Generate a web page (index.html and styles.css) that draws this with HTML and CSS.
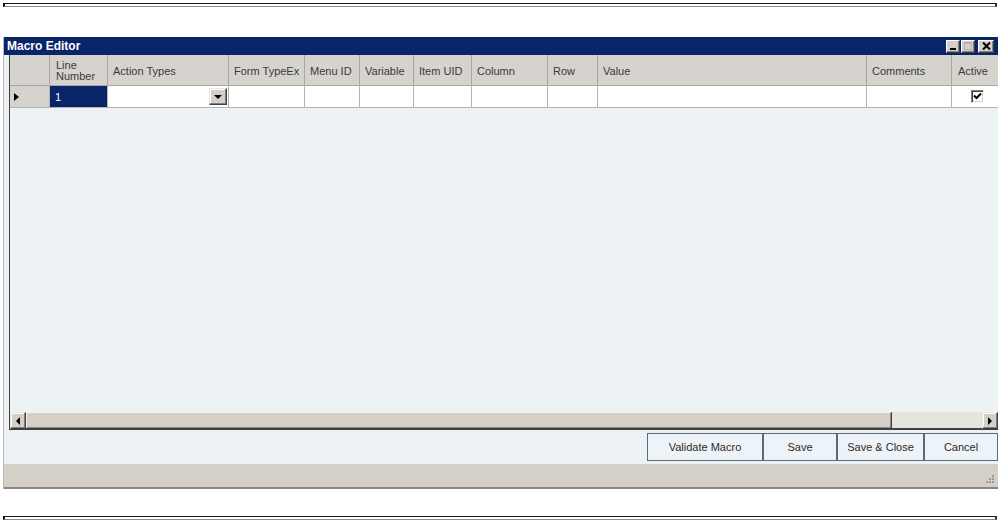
FILE: index.html
```html
<!DOCTYPE html>
<html lang="en">
<head>
  <meta charset="UTF-8">
  <title>Macro Editor</title>
  <link rel="stylesheet" href="styles.css">
</head>
<body>
<div class="rule"></div>

<div class="window">
  <div class="titlebar">
    <span class="title">Macro Editor</span>
    <div class="caption-btns">
      <div class="cap-btn min"><span></span></div>
      <div class="cap-btn max"><span></span></div>
      <div class="cap-btn close">
        <svg width="9" height="8" viewBox="0 0 9 8"><path d="M1 0.5 L8 7.5 M8 0.5 L1 7.5" stroke="#000" stroke-width="2"/></svg>
      </div>
    </div>
  </div>

  <div class="grid">
    <div class="head">
      <div class="hc"></div>
      <div class="hc two">Line<br>Number</div>
      <div class="hc">Action Types</div>
      <div class="hc">Form TypeEx</div>
      <div class="hc">Menu ID</div>
      <div class="hc">Variable</div>
      <div class="hc">Item UID</div>
      <div class="hc">Column</div>
      <div class="hc">Row</div>
      <div class="hc">Value</div>
      <div class="hc">Comments</div>
      <div class="hc">Active</div>
    </div>
    <div class="row">
      <div class="rc rowhead"><span class="arrow"></span></div>
      <div class="rc selected">1</div>
      <div class="rc combo"><div class="drop"><span></span></div></div>
      <div class="rc"></div>
      <div class="rc"></div>
      <div class="rc"></div>
      <div class="rc"></div>
      <div class="rc"></div>
      <div class="rc"></div>
      <div class="rc"></div>
      <div class="rc"></div>
      <div class="rc check-cell">
        <div class="check">
          <svg width="9" height="9" viewBox="0 0 9 9"><path d="M1 3.5 L3.5 6 L8 1.5" fill="none" stroke="#000" stroke-width="2"/></svg>
        </div>
      </div>
    </div>
    <div class="empty"></div>
    <div class="hscroll">
      <div class="sb-btn"><span class="tri-left"></span></div>
      <div class="thumb"></div>
      <div class="track"></div>
      <div class="sb-btn"><span class="tri-right"></span></div>
    </div>
  </div>

  <div class="actions">
    <div class="btn validate">Validate Macro</div>
    <div class="btn save">Save</div>
    <div class="btn save-close">Save &amp; Close</div>
    <div class="btn cancel">Cancel</div>
  </div>

  <div class="statusbar">
    <svg class="grip" width="11" height="11" viewBox="0 0 11 11">
      <g fill="#9a9890">
        <rect x="8" y="0" width="2" height="2"/>
        <rect x="5" y="3" width="2" height="2"/>
        <rect x="8" y="3" width="2" height="2"/>
        <rect x="2" y="6" width="2" height="2"/>
        <rect x="5" y="6" width="2" height="2"/>
        <rect x="8" y="6" width="2" height="2"/>
      </g>
    </svg>
  </div>
</div>

<div class="rule bottom"></div>
</body>
</html>
```

FILE: styles.css
```css
/* page */
* {
  box-sizing: border-box;
}

html,
body {
  margin: 0;
  padding: 0;
}

body {
  background: #fff;
  font-family: "Liberation Sans", Arial, sans-serif;
  font-size: 11px;
  color: #222;
}

/* thin rules above and below the form */
.rule {
  width: 994px;
  height: 4px;
  margin: 3px 0 0 3px;
  border-top: 1px solid #1c1c1c;
  border-bottom: 1px solid #8a8a8a;
  border-left: 2px solid #111;
  border-right: 2px solid #333;
}

.rule.bottom {
  margin-top: 27px;
}

/* window */
.window {
  width: 995px;
  height: 452px;
  margin: 30px 0 0 3px;
  display: flex;
  flex-direction: column;
  background: #edf2f5;
  border-left: 1px solid #b8b8b8;
}

.titlebar {
  height: 18px;
  flex: none;
  background: #0a246a;
  display: flex;
  align-items: center;
  justify-content: space-between;
  padding: 0 4px 0 3px;
}

.title {
  color: #fff;
  font-weight: bold;
  font-size: 12px;
}

.caption-btns {
  display: flex;
  gap: 1px;
}

.cap-btn {
  width: 14px;
  height: 13px;
  background: #d4d0c8;
  border: 1px solid;
  border-color: #fff #404040 #404040 #fff;
  box-shadow: inset -1px -1px #808080;
  position: relative;
}

.cap-btn.close {
  width: 16px;
  margin-left: 2px;
  display: flex;
  align-items: center;
  justify-content: center;
}

.cap-btn.min span {
  position: absolute;
  left: 3px;
  bottom: 2px;
  width: 6px;
  height: 2px;
  background: #000;
}

.cap-btn.max span {
  position: absolute;
  left: 2px;
  top: 1px;
  width: 8px;
  height: 8px;
  border: 1px solid #b4b0a8;
  border-top-width: 2px;
}

/* grid */
.grid {
  height: 375px;
  flex: none;
  margin-left: 5px;
  display: flex;
  flex-direction: column;
  border-left: 1px solid #404040;
  border-bottom: 1px solid #404040;
}

.head,
.row {
  display: grid;
  grid-template-columns: 40px 58px 121px 76px 55px 54px 58px 76px 50px 269px 85px 46px;
}

.hc {
  height: 31px;
  background: #d6d3ce;
  border-right: 1px solid #a9a7a2;
  border-bottom: 1px solid #a9a7a2;
  display: flex;
  align-items: center;
  padding: 1px 0 0 5px;
  color: #3a3a3a;
  white-space: nowrap;
}

.hc:last-child {
  border-right: none;
  padding-left: 6px;
}

.hc.two {
  line-height: 11px;
  padding-left: 6px;
  padding-top: 1px;
}

.rc {
  height: 22px;
  background: #fff;
  border-right: 1px solid #b4b4b4;
  border-bottom: 1px solid #b4b4b4;
}

.rc:last-child {
  border-right: none;
}

.rc.rowhead {
  background: #d6d3ce;
  display: flex;
  align-items: center;
  padding-left: 4px;
}

.arrow {
  width: 0;
  height: 0;
  border-left: 5px solid #000;
  border-top: 4px solid transparent;
  border-bottom: 4px solid transparent;
}

.rc.selected {
  background: #0a246a;
  color: #fff;
  padding: 5px 0 0 5px;
}

.rc.combo {
  display: flex;
  justify-content: flex-end;
  align-items: center;
  padding-right: 1px;
}

.drop {
  width: 18px;
  height: 17px;
  background: #d4d0c8;
  border: 1px solid;
  border-color: #e8e6e2 #404040 #404040 #e8e6e2;
  box-shadow: inset -1px -1px #808080, inset 1px 1px #fff;
  display: flex;
  align-items: center;
  justify-content: center;
}

.drop span {
  width: 0;
  height: 0;
  border-top: 4px solid #000;
  border-left: 4px solid transparent;
  border-right: 4px solid transparent;
  margin-top: 1px;
}

.check-cell {
  display: flex;
  align-items: center;
  justify-content: center;
  padding-left: 4px;
}

.check {
  width: 13px;
  height: 13px;
  background: #fff;
  border: 1px solid;
  border-color: #808080 #fff #fff #808080;
  box-shadow: inset 1px 1px #404040, inset -1px -1px #d4d0c8;
  display: flex;
  align-items: center;
  justify-content: center;
}

.empty {
  flex: 1;
  background: #edf2f5;
}

/* horizontal scrollbar */
.hscroll {
  height: 17px;
  flex: none;
  display: flex;
  background: #e6e4de;
}

.sb-btn {
  width: 16px;
  background: #d4d0c8;
  border: 1px solid;
  border-color: #e8e6e2 #404040 #404040 #e8e6e2;
  box-shadow: inset -1px -1px #808080, inset 1px 1px #fff;
  display: flex;
  align-items: center;
  justify-content: center;
}

.tri-left {
  border-right: 4px solid #000;
  border-top: 4px solid transparent;
  border-bottom: 4px solid transparent;
}

.tri-right {
  border-left: 4px solid #000;
  border-top: 4px solid transparent;
  border-bottom: 4px solid transparent;
}

.thumb {
  width: 866px;
  background: #d4d0c8;
  border-right: 1px solid #404040;
  border-bottom: 1px solid #404040;
  box-shadow: inset 1px 1px #f4f3f0, inset -1px -1px #8a8780;
}

.track {
  flex: 1;
  border-bottom: 1px solid #404040;
}

/* buttons under the grid */
.actions {
  height: 34px;
  flex: none;
  display: flex;
  justify-content: flex-end;
  padding-top: 3px;
}

.btn {
  height: 28px;
  display: flex;
  align-items: center;
  justify-content: center;
  background: #eef3f7;
  border: 1px solid #566a80;
  color: #2a2a2a;
  font-size: 11px;
}

.btn.validate {
  width: 116px;
}

.btn.save {
  width: 74px;
}

.btn.save-close {
  width: 87px;
}

.btn.cancel {
  width: 74px;
}

.statusbar {
  flex: 1;
  background: #d4d0c8;
  border-bottom: 2px solid #8a8780;
  display: flex;
  justify-content: flex-end;
  align-items: flex-end;
  padding: 0 3px 1px 0;
}
```
